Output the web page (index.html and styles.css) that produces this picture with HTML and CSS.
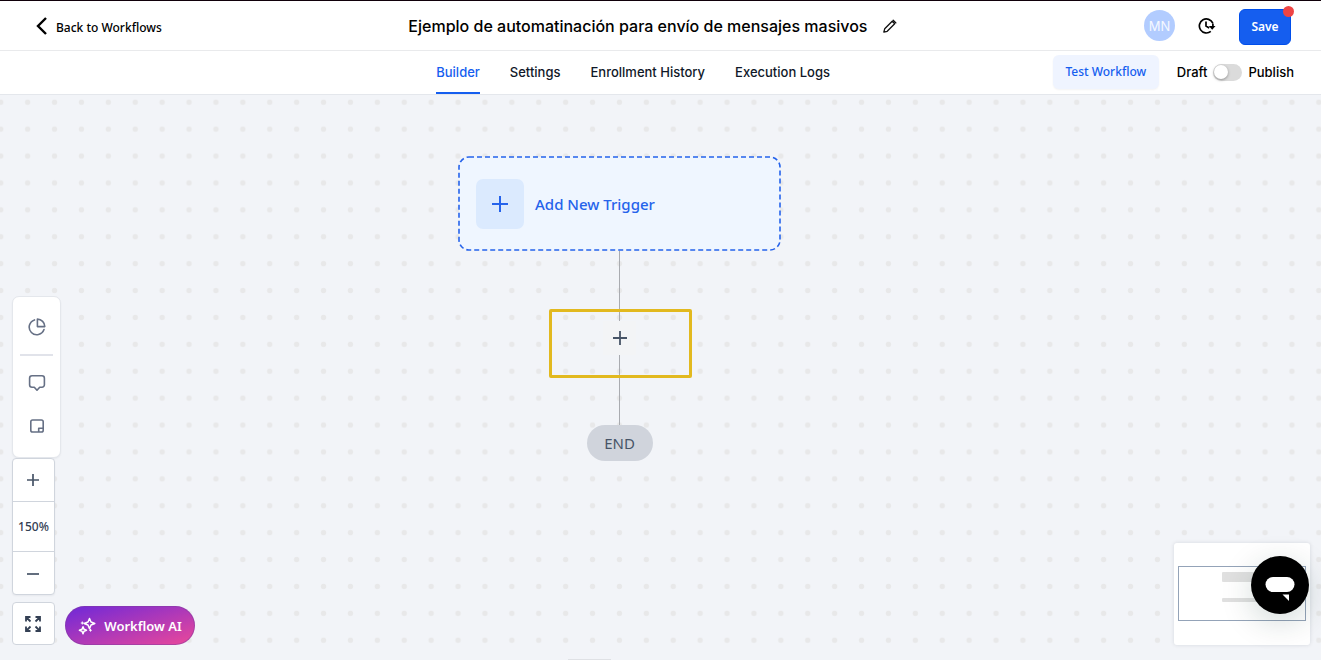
FILE: index.html
```html
<!DOCTYPE html>
<html lang="es">
<head>
    <meta charset="UTF-8">
    <meta name="viewport" content="width=device-width, initial-scale=1.0">
    <title>Workflow Builder</title>
    <link rel="stylesheet" href="styles.css">
</head>
<body>
    <header class="header">
        <a class="back" href="#">
            <svg width="12" height="18" viewBox="0 0 12 18" fill="none" stroke="#000" stroke-width="2.4"><path d="M10 1 2 9l8 8"/></svg>
            <span>Back to Workflows</span>
        </a>
        <div class="title">
            <h1>Ejemplo de automatinación para envío de mensajes masivos</h1>
            <button class="icon-btn" aria-label="Rename">
                <svg width="14" height="14" viewBox="0 0 14 14" fill="none" stroke="#111" stroke-width="1.3" stroke-linejoin="round" stroke-linecap="round"><path d="M.8 13.2 1.7 9.8 9.2 2.3l2.5 2.5-7.5 7.5zM10.2 1.2l2.7 2.7"/></svg>
            </button>
        </div>
        <div class="header-actions">
            <span class="avatar">MN</span>
            <button class="icon-btn" aria-label="Version history">
                <svg width="18" height="16" viewBox="0 0 18 16" fill="none" stroke="#000" stroke-width="1.7"><path d="M14.8 5.2A7 7 0 1 0 12.8 13.4M8 3.5V8l3.2 1.9M14.9 5.5v3"/><path d="M10.8 8h6.7l-3.3 3.8z" fill="#000" stroke="none"/></svg>
            </button>
            <button class="save">Save<span class="unsaved-dot"></span></button>
        </div>
    </header>

    <div class="subheader">
        <nav class="tabs">
            <a class="tab active" href="#">Builder</a>
            <a class="tab" href="#">Settings</a>
            <a class="tab" href="#">Enrollment History</a>
            <a class="tab" href="#">Execution Logs</a>
        </nav>
        <div class="publish">
            <button class="test">Test Workflow</button>
            <label class="switch">
                <span>Draft</span>
                <input type="checkbox" role="switch">
                <span>Publish</span>
            </label>
        </div>
    </div>

    <main class="canvas">
        <svg class="dots" width="100%" height="100%">
            <defs>
                <pattern id="dot-grid" x="-12.7" y="-6.2" width="26.9" height="26.9" patternUnits="userSpaceOnUse">
                    <circle cx="13.45" cy="13.45" r="2.7" fill="#e8e8e9"/>
                </pattern>
            </defs>
            <rect width="100%" height="100%" fill="url(#dot-grid)"/>
        </svg>

        <div class="flow">
            <button class="trigger">
                <svg class="trigger-outline" width="100%" height="100%"><rect x="1" y="1" rx="10" fill="#eff6ff" stroke="#2563eb" stroke-width="1.6" stroke-dasharray="5 3"/></svg>
                <span class="trigger-icon">
                    <svg width="16" height="16" viewBox="0 0 16 16" stroke="#2563eb" stroke-width="2"><path d="M8 0v16M0 8h16"/></svg>
                </span>
                <span class="trigger-label">Add New Trigger</span>
            </button>
            <div class="line"></div>
            <div class="step">
                <button class="add-step" aria-label="Add step">
                    <svg width="14" height="14" viewBox="0 0 14 14" stroke="#475467" stroke-width="1.8"><path d="M7 0v14M0 7h14"/></svg>
                </button>
                <div class="highlight"></div>
            </div>
            <div class="line"></div>
            <div class="end">END</div>
        </div>

        <div class="controls">
            <div class="control-stack">
                <div class="tools">
                    <button class="icon-btn" aria-label="Stats">
                        <svg width="18" height="18" viewBox="0 0 18 18" fill="none" stroke="#667085" stroke-width="1.6" stroke-linejoin="round" stroke-linecap="round"><path d="M6.5 1.9A7.6 7.6 0 1 0 16 11.6"/><path d="M9.4 1.1v7.5h7.4a7.5 7.5 0 0 0-7.4-7.5z"/></svg>
                    </button>
                    <hr>
                    <button class="icon-btn" aria-label="Comments">
                        <svg width="18" height="18" viewBox="0 0 18 18" fill="none" stroke="#667085" stroke-width="1.6" stroke-linejoin="round"><path d="M4 1.8h10a2.4 2.4 0 0 1 2.4 2.4v6.6a2.4 2.4 0 0 1-2.4 2.4h-2.3L9 16.2l-2.7-3H4a2.4 2.4 0 0 1-2.4-2.4V4.2A2.4 2.4 0 0 1 4 1.8z"/></svg>
                    </button>
                    <button class="icon-btn" aria-label="Notes">
                        <svg width="18" height="18" viewBox="0 0 18 18" fill="none" stroke="#667085" stroke-width="1.6" stroke-linejoin="round"><rect x="2.8" y="3" width="12.4" height="12" rx="1.8"/><path d="M10.7 15v-3.7h4.5"/></svg>
                    </button>
                </div>
                <div class="zoom">
                    <button aria-label="Zoom in"><svg width="13" height="13" viewBox="0 0 13 13" stroke="#475467" stroke-width="1.7"><path d="M6 0v12M0 6h12"/></svg></button>
                    <button class="zoom-level">150%</button>
                    <button aria-label="Zoom out"><svg width="13" height="13" viewBox="0 0 13 13" stroke="#475467" stroke-width="1.7"><path d="M0 7h12"/></svg></button>
                </div>
                <button class="fit" aria-label="Fit to screen">
                    <svg width="17" height="16" viewBox="0 0 17 16" fill="none" stroke="#344054" stroke-width="1.8"><path d="M1 5.5V1h4.5M1 1l4.500 4.500M10.500 1H15v4.500M15 1l-4.500 4.500M1 10.500V15h4.500M1 15l4.500-4.500M15 10.500V15h-4.500M15 15l-4.500-4.500"/></svg>
                </button>
            </div>
            <button class="ai">
                <svg width="18" height="18" viewBox="0 0 18 18" fill="none" stroke="#fff" stroke-width="1.5" stroke-linejoin="round"><path d="M11.5 1.5 13 5l3.8 1.5L13 8l-1.5 3.8L10 8 6.2 6.5 10 5zM5 9.7l1 2.5 2.5 1-2.5 1-1 2.6-1-2.6-2.6-1 2.6-1z"/><path d="M4.3 4.5v3M2.8 6h3M12.5 12v2.6M11.2 13.3h2.6" stroke-width="1"/></svg>
                Workflow AI
            </button>
        </div>

        <div class="minimap">
            <svg width="128" height="55" viewBox="0 0 128 55"><rect x=".5" y=".5" width="127" height="54" fill="none" stroke="#94a3b8"/><rect x="44" y="6" width="56" height="10" rx="1" fill="#e0e0e0"/><rect x="44" y="32" width="56" height="4" rx="1" fill="#e0e0e0"/></svg>
        </div>
        <button class="chat" aria-label="Open chat">
            <svg width="30" height="24" viewBox="0 0 30 24" fill="#fff"><rect x=".5" y="0" width="29" height="15" rx="7.5"/><path d="M17.5 17.5H24V24z"/></svg>
        </button>
        <div class="drawer-handle"></div>
    </main>
</body>
</html>
```
FILE: styles.css
```css
* {
    box-sizing: border-box;
}
body {
    margin: 0;
    min-height: 100vh;
    display: flex;
    flex-direction: column;
    font-family: Inter, "Liberation Sans", sans-serif;
    font-size: 13px;
    line-height: 20px;
    color: #101828;
    background: #fff;
}
button {
    font: inherit;
    color: inherit;
    padding: 0;
    border: none;
    background: none;
    cursor: pointer;
}
a {
    color: inherit;
    text-decoration: none;
}
svg {
    display: block;
}
.icon-btn {
    display: flex;
    align-items: center;
    justify-content: center;
}

/* header */
.header {
    display: flex;
    align-items: center;
    justify-content: space-between;
    height: 51px;
    padding: 0 30px 0 36px;
    border-top: 1px solid #10000a;
    border-bottom: 1px solid #e9eaec;
}
.back {
    display: flex;
    align-items: center;
    gap: 8px;
    font-family: "Noto Sans", sans-serif;
    font-weight: 500;
    font-size: 12px;
    color: #000;
}
.back span {
    padding-top: 4px;
}
.title {
    display: flex;
    align-items: center;
    gap: 16px;
}
h1 {
    margin: 0;
    font-size: 16px;
    font-weight: 500;
    color: #000;
}
.header-actions {
    display: flex;
    align-items: center;
    gap: 23px;
}
.avatar {
    width: 31px;
    height: 31px;
    border-radius: 50%;
    background: #b2ccff;
    color: #f5f8ff;
    line-height: 32px;
    text-align: center;
}
.save {
    position: relative;
    width: 52px;
    height: 36px;
    margin-top: 2px;
    border: 1px solid #004eeb;
    border-radius: 6px;
    background: #155eef;
    color: #fff;
    font-family: "Noto Sans", sans-serif;
    font-size: 12px;
    font-weight: 600;
}
.unsaved-dot {
    position: absolute;
    top: -4px;
    right: -4px;
    width: 11px;
    height: 11px;
    border-radius: 50%;
    background: #ef4444;
}

/* tabs */
.subheader {
    display: grid;
    grid-template-columns: 47fr auto 50fr;
    height: 44px;
    padding-right: 27px;
    border-bottom: 1px solid #e4e7ec;
}
.tabs {
    grid-column: 2;
    display: flex;
    gap: 30px;
}
.tab {
    padding-top: 11px;
    font-weight: 500;
    white-space: nowrap;
}
.tab.active {
    color: #155eef;
    border-bottom: 2px solid #155eef;
}
.publish {
    display: flex;
    align-items: center;
    justify-content: flex-end;
    gap: 18px;
    padding-bottom: 1px;
}
.test {
    width: 106px;
    height: 34px;
    border-radius: 6px;
    background: #eff4ff;
    box-shadow: 0 1px 2px rgba(16, 24, 40, 0.05);
    color: #155eef;
    font-family: "Noto Sans", sans-serif;
    font-size: 12px;
    font-weight: 500;
}
.switch {
    display: flex;
    align-items: center;
    gap: 6px;
    font-weight: 500;
    color: #000;
}
.switch input {
    appearance: none;
    display: flex;
    align-items: center;
    width: 29px;
    height: 17px;
    margin: 0;
    padding: 0 1px;
    border-radius: 9px;
    background: #dbdbdb;
}
.switch input::before {
    content: "";
    width: 14px;
    height: 14px;
    border-radius: 50%;
    background: #fff;
    box-shadow: 0 1px 3px rgba(0, 0, 0, 0.35);
}
.switch input:checked::before {
    margin-left: auto;
}

/* canvas */
.canvas {
    position: relative;
    flex: 1;
    min-height: 565px;
    overflow: hidden;
    background: #f2f4f8;
}
.dots {
    position: absolute;
    inset: 0;
}
.flow {
    position: relative;
    display: flex;
    flex-direction: column;
    align-items: center;
    padding: 61px 82px 0 0;
}
.trigger {
    position: relative;
    display: flex;
    align-items: center;
    gap: 11px;
    width: 323px;
    height: 95px;
    padding: 0 18px;
}
.trigger-outline {
    position: absolute;
    inset: 0;
}
.trigger-outline rect {
    width: calc(100% - 2px);
    height: calc(100% - 2px);
}
.trigger-icon {
    position: relative;
    display: flex;
    align-items: center;
    justify-content: center;
    width: 48px;
    height: 50px;
    border-radius: 7px;
    background: #dbeafe;
}
.trigger-label {
    position: relative;
    font-family: "Noto Sans", sans-serif;
    font-size: 15px;
    font-weight: 500;
    color: #2563eb;
}
.line {
    width: 1px;
    height: 70px;
    background: #a9abb0;
}
.step {
    position: relative;
}
.add-step {
    display: flex;
    align-items: center;
    justify-content: center;
    width: 33px;
    height: 34px;
    background: #f3f4f6;
}
.highlight {
    position: absolute;
    top: -12px;
    left: -54px;
    width: 143px;
    height: 69px;
    border: 3px solid #e2b91f;
    border-radius: 2px;
    pointer-events: none;
}
.end {
    width: 66px;
    border-radius: 18px;
    background: #d0d4dc;
    color: #475467;
    font-family: "Noto Sans", sans-serif;
    font-size: 15px;
    line-height: 36px;
    text-align: center;
}

/* floating controls */
.controls {
    position: absolute;
    left: 12px;
    bottom: 15px;
    display: flex;
    align-items: flex-end;
}
.control-stack {
    display: flex;
    flex-direction: column;
    width: 53px;
}
.tools {
    display: flex;
    flex-direction: column;
    align-items: center;
    width: 49px;
    height: 162px;
    padding-top: 21px;
    border: 1px solid #e4e7ec;
    border-radius: 7px;
    background: #fff;
    box-shadow: 0 1px 2px rgba(16, 24, 40, 0.05);
}
.tools hr {
    width: 33px;
    height: 2px;
    margin: 18px 0;
    border: none;
    background: #e1e3ea;
}
.tools hr + .icon-btn {
    margin-bottom: 25px;
}
.zoom {
    width: 43px;
    border: 1px solid #d0d5dd;
    border-radius: 4px;
    background: #fff;
    box-shadow: 0 1px 2px rgba(16, 24, 40, 0.05);
}
.zoom button {
    display: flex;
    align-items: center;
    justify-content: center;
    width: 100%;
    height: 42px;
}
.zoom .zoom-level {
    height: 51px;
    border-top: 1px solid #d0d5dd;
    border-bottom: 1px solid #d0d5dd;
    color: #344054;
    font-family: "Noto Sans", sans-serif;
    font-size: 12px;
    font-weight: 500;
}
.fit {
    display: flex;
    align-items: center;
    justify-content: center;
    width: 43px;
    height: 43px;
    margin-top: 7px;
    border: 1px solid #d0d5dd;
    border-radius: 4px;
    background: #fff;
}
.ai {
    display: flex;
    align-items: center;
    justify-content: center;
    gap: 8px;
    width: 130px;
    height: 39px;
    border: 1px solid rgba(130, 60, 160, 0.5);
    border-radius: 20px;
    background: linear-gradient(to bottom right, #6d28d9, #ec4899) border-box;
    color: #fff;
    font-family: "Noto Sans", sans-serif;
    font-weight: 600;
}
.minimap {
    position: absolute;
    right: 11px;
    bottom: 15px;
    width: 136px;
    padding: 23px 4px 24px;
    border-radius: 3px;
    background: #fff;
    box-shadow: 0 0 4px rgba(16, 24, 40, 0.12);
}
.chat {
    position: absolute;
    right: 12px;
    bottom: 46px;
    display: flex;
    justify-content: center;
    width: 58px;
    height: 58px;
    padding-top: 21px;
    border-radius: 50%;
    background: #000;
    box-shadow: 0 8px 32px rgba(0, 50, 40, 0.18);
}
.drawer-handle {
    position: absolute;
    left: 43%;
    bottom: 0;
    width: 43px;
    height: 1px;
    background: #dfe1e5;
}
```
